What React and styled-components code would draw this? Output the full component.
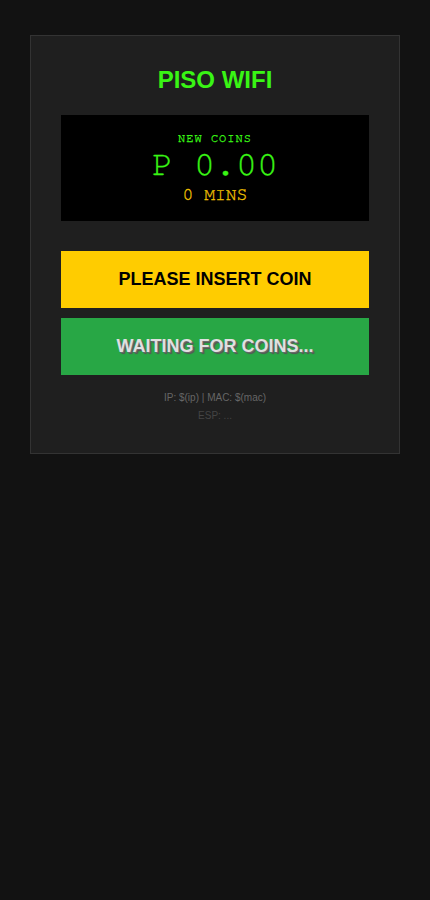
import React from "react";
import styled, { createGlobalStyle } from "styled-components";

const Global = createGlobalStyle`
  html, body {
    margin: 0;
    padding: 0;
    background: #121212;
    font-family: "Liberation Sans", Arial, sans-serif;
  }
`;

const Page = styled.div`
  min-height: 900px;
  padding: 35px 30px;
  box-sizing: border-box;
`;

const Card = styled.div`
  background: #1f1f1f;
  border: 1px solid #333;
  padding: 30px 30px 28px;
  text-align: center;
`;

const Title = styled.h1`
  margin: 0 0 21px;
  font-size: 24px;
  font-weight: bold;
  color: #39f514;
`;

const Display = styled.div`
  background: #000;
  padding: 16px 10px 15px;
  font-family: "FreeMono", "Nimbus Mono PS", "Courier New", "Liberation Mono", monospace;
  margin-bottom: 30px;
`;

const Label = styled.div`
  color: #39f514;
  font-size: 12px;
  letter-spacing: 1px;
  line-height: 14px;
  -webkit-text-stroke: 0.3px #39f514;
`;

const Amount = styled.div`
  color: #39f514;
  font-size: 35px;
  line-height: 40px;
  -webkit-text-stroke: 0.3px #39f514;
`;

const Mins = styled.div`
  color: #f0c000;
  font-size: 18px;
  line-height: 21px;
  -webkit-text-stroke: 0.3px #f0c000;
`;

const Button = styled.div`
  background: ${(p) => p.$bg};
  color: ${(p) => p.$color};
  text-shadow: ${(p) => p.$shadow || "none"};
  font-size: 18px;
  font-weight: bold;
  line-height: 21px;
  padding: 18px 10px;
  & + & {
    margin-top: 10px;
  }
`;

const Footer = styled.div`
  margin-top: 14px;
  font-size: 10px;
  line-height: 18px;
`;

const Line = styled.div`
  color: ${(p) => p.$color};
`;

export default function App() {
  return (
    <Page>
      <Global />
      <Card>
        <Title>PISO WIFI</Title>
        <Display>
          <Label>NEW COINS</Label>
          <Amount>P 0.00</Amount>
          <Mins>0 MINS</Mins>
        </Display>
        <Button $bg="#ffcc00" $color="#000">PLEASE INSERT COIN</Button>
        <Button $bg="#28a745" $color="#e0e0e0" $shadow="1px 1px 0 #6a6a6a, 2px 2px 1px #555">
          WAITING FOR COINS...
        </Button>
        <Footer>
          <Line $color="#666">IP: $(ip) | MAC: $(mac)</Line>
          <Line $color="#444">ESP: ...</Line>
        </Footer>
      </Card>
    </Page>
  );
}
